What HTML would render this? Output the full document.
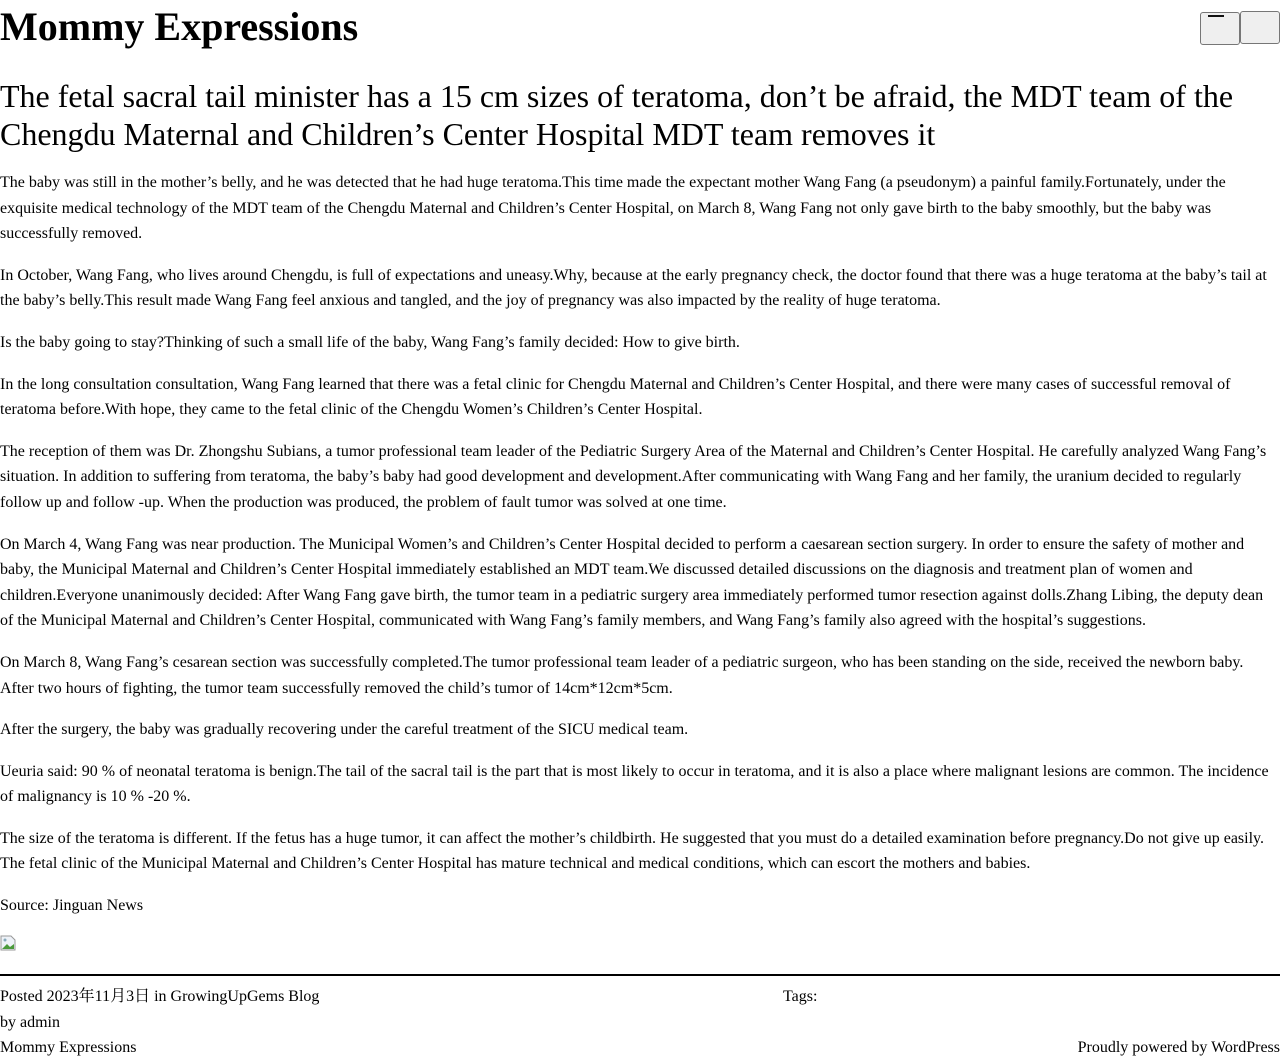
<!DOCTYPE html>
<html><head><meta charset="utf-8"><style>
body{margin:0;font-family:"Liberation Serif","Noto Serif CJK SC",serif;color:#000;background:#fff;font-size:16px;}
h1{margin:0;font-size:40px;line-height:54px;font-weight:bold;position:absolute;top:0;left:0;}
.btns{position:absolute;top:11px;right:0;display:flex;}
.btn{width:40px;height:33px;box-sizing:border-box;background:#efefef;border:1px solid #767676;border-radius:3px;position:relative;}
.btn1{margin-top:1px;}
.btn1:after{content:"";position:absolute;left:7px;top:2px;width:16px;height:2px;background:#111;}
h2{position:absolute;top:77px;left:0;margin:0;font-size:32px;font-weight:normal;line-height:38px;width:1270px;}
.content{position:absolute;top:170px;left:0;right:0;}
p{margin:0 0 16px;line-height:25.6px;}
.img{width:16px;height:16px;margin-top:0;}
hr{position:absolute;top:974px;left:0;right:0;margin:0;border:0;border-top:2px solid #000;}
.f{position:absolute;left:0;line-height:20px;}
</style></head><body>
<h1>Mommy Expressions</h1>
<div class="btns"><div class="btn btn1"></div><div class="btn"></div></div>
<h2>The fetal sacral tail minister has a 15 cm sizes of teratoma, don’t be afraid, the MDT team of the Chengdu Maternal and Children’s Center Hospital MDT team removes it</h2>
<div class="content">
<p>The baby was still in the mother’s belly, and he was detected that he had huge teratoma.This time made the expectant mother Wang Fang (a pseudonym) a painful family.Fortunately, under the exquisite medical technology of the MDT team of the Chengdu Maternal and Children’s Center Hospital, on March 8, Wang Fang not only gave birth to the baby smoothly, but the baby was successfully removed.</p>
<p>In October, Wang Fang, who lives around Chengdu, is full of expectations and uneasy.Why, because at the early pregnancy check, the doctor found that there was a huge teratoma at the baby’s tail at the baby’s belly.This result made Wang Fang feel anxious and tangled, and the joy of pregnancy was also impacted by the reality of huge teratoma.</p>
<p>Is the baby going to stay?Thinking of such a small life of the baby, Wang Fang’s family decided: How to give birth.</p>
<p>In the long consultation consultation, Wang Fang learned that there was a fetal clinic for Chengdu Maternal and Children’s Center Hospital, and there were many cases of successful removal of teratoma before.With hope, they came to the fetal clinic of the Chengdu Women’s Children’s Center Hospital.</p>
<p>The reception of them was Dr. Zhongshu Subians, a tumor professional team leader of the Pediatric Surgery Area of the Maternal and Children’s Center Hospital. He carefully analyzed Wang Fang’s situation. In addition to suffering from teratoma, the baby’s baby had good development and development.After communicating with Wang Fang and her family, the uranium decided to regularly follow up and follow -up. When the production was produced, the problem of fault tumor was solved at one time.</p>
<p>On March 4, Wang Fang was near production. The Municipal Women’s and Children’s Center Hospital decided to perform a caesarean section surgery. In order to ensure the safety of mother and baby, the Municipal Maternal and Children’s Center Hospital immediately established an MDT team.We discussed detailed discussions on the diagnosis and treatment plan of women and children.Everyone unanimously decided: After Wang Fang gave birth, the tumor team in a pediatric surgery area immediately performed tumor resection against dolls.Zhang Libing, the deputy dean of the Municipal Maternal and Children’s Center Hospital, communicated with Wang Fang’s family members, and Wang Fang’s family also agreed with the hospital’s suggestions.</p>
<p>On March 8, Wang Fang’s cesarean section was successfully completed.The tumor professional team leader of a pediatric surgeon, who has been standing on the side, received the newborn baby. After two hours of fighting, the tumor team successfully removed the child’s tumor of 14cm*12cm*5cm.</p>
<p>After the surgery, the baby was gradually recovering under the careful treatment of the SICU medical team.</p>
<p>Ueuria said: 90 % of neonatal teratoma is benign.The tail of the sacral tail is the part that is most likely to occur in teratoma, and it is also a place where malignant lesions are common. The incidence of malignancy is 10 % -20 %.</p>
<p>The size of the teratoma is different. If the fetus has a huge tumor, it can affect the mother’s childbirth. He suggested that you must do a detailed examination before pregnancy.Do not give up easily. The fetal clinic of the Municipal Maternal and Children’s Center Hospital has mature technical and medical conditions, which can escort the mothers and babies.</p>
<p>Source: Jinguan News</p>
<svg class="img" viewBox="0 0 16 16"><path d="M1 1h10l4 4v10H1z" fill="#eef2f8" stroke="#999"/><path d="M2 14l5-5 3 3 4-3v5z" fill="#4a9a3a"/><circle cx="5" cy="5" r="1.5" fill="#8ab"/></svg>
</div>
<hr>
<div class="f" style="top:987px">Posted 2023年11月3日 in GrowingUpGems Blog</div>
<div class="f" style="top:987px;left:783px">Tags:</div>
<div class="f" style="top:1013px">by admin</div>
<div class="f" style="top:1038px">Mommy Expressions</div>
<div class="f" style="top:1038px;left:auto;right:0">Proudly powered by WordPress</div>
</body></html>
